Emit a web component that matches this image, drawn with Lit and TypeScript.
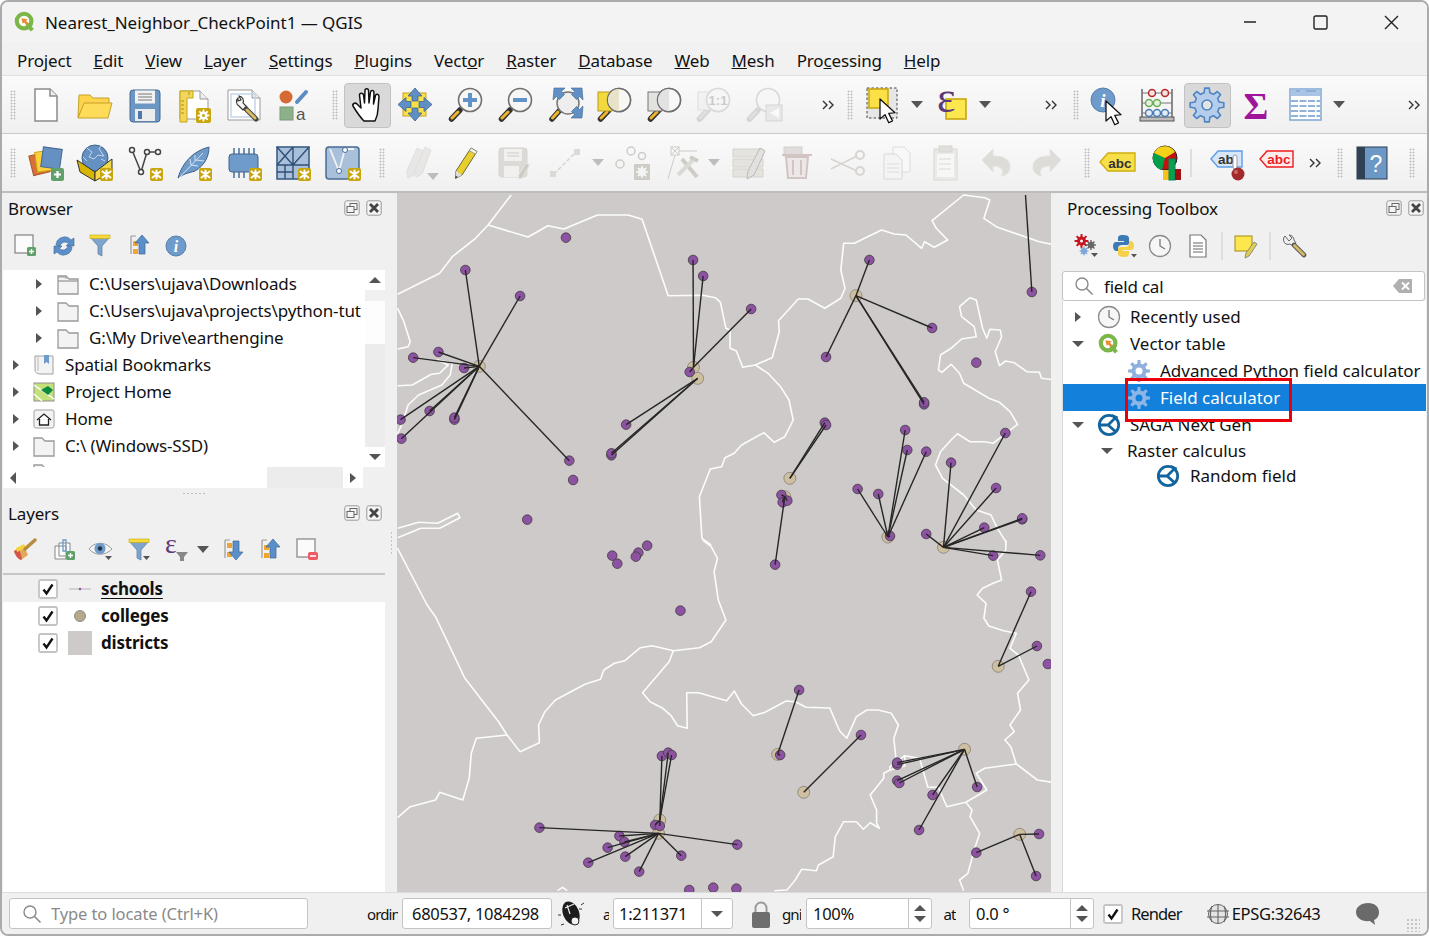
import { LitElement, html, css, svg } from 'lit'
import { customElement } from 'lit/decorators.js'

type Pt = [number, number]

// the map was measured off two crops, so points are kept in crop coordinates
const T = (x: number, y: number): Pt => [395 + x / 2.376, 195 + y / 3]
const B = (x: number, y: number): Pt => [395 + x / 2.376, 540 + y / 3]
const pts = (f: (x: number, y: number) => Pt, ...n: number[]) => {
  const out: Pt[] = []
  for (let i = 0; i < n.length; i += 2) out.push(f(n[i], n[i + 1]))
  return out
}

const borders: Pt[][] = [
  pts(T, 275, 0, 220, 90, 190, 130, 135, 185, 105, 235, 5, 298),
  pts(T, 220, 90, 315, 126, 362, 92, 400, 102, 480, 60, 553, 60, 586, 73, 648, 302, 730, 301, 760, 308, 772, 322, 785, 400, 795, 405, 795, 460, 810, 468, 825, 517, 855, 510, 895, 488, 912, 410, 910, 377, 957, 312, 980, 312, 1020, 340, 1058, 310, 1068, 280, 1058, 225, 1065, 145, 1090, 145, 1155, 105, 1185, 117, 1213, 120, 1250, 160, 1257, 140, 1280, 157, 1312, 135, 1285, 100, 1275, 77, 1350, 0, 1400, 8, 1412, 15, 1398, 70, 1430, 97, 1530, 140, 1568, 150),
  pts(T, 855, 510, 885, 535, 915, 575, 935, 615, 945, 675, 925, 725, 900, 742, 875, 713, 822, 750, 805, 775, 783, 788, 775, 815, 748, 822, 722, 905, 728, 1030, 750, 1050),
  pts(T, 1365, 308, 1340, 335, 1345, 365, 1375, 395, 1380, 425, 1345, 432, 1320, 460, 1295, 480, 1290, 525, 1298, 532, 1320, 508, 1340, 535, 1350, 565, 1410, 610, 1435, 622, 1460, 650, 1478, 688, 1450, 715, 1420, 745, 1400, 740, 1365, 740, 1335, 716, 1320, 735, 1295, 770, 1283, 810, 1300, 850, 1350, 900, 1380, 945, 1415, 960, 1430, 1000, 1450, 1040, 1450, 1050),
  pts(T, 1365, 308, 1380, 315, 1395, 400, 1405, 430, 1412, 403, 1437, 405, 1440, 425, 1425, 470, 1435, 512, 1450, 498, 1470, 503, 1500, 530, 1530, 532, 1535, 550, 1568, 555),
  pts(T, 5, 340, 20, 380, 35, 440, 30, 455, 5, 462),
  pts(T, 5, 572, 40, 570, 85, 538, 105, 535, 125, 510, 100, 495, 135, 505, 130, 540, 110, 570, 55, 600, 30, 630, 15, 690, 5, 715),
  pts(T, 5, 1000, 55, 982, 100, 985, 148, 955, 153, 968, 105, 1000, 60, 1000, 5, 1028),
  pts(B, 730, 0, 750, 20, 765, 55, 757, 95, 767, 180, 785, 240, 750, 305, 722, 323, 660, 332, 610, 317, 582, 323, 545, 362, 520, 370, 495, 390, 487, 418, 450, 433, 380, 480, 355, 515, 340, 555, 342, 608, 296, 635, 265, 585, 245, 545, 165, 415, 95, 230, 75, 195, 5, 25),
  pts(B, 265, 585, 192, 595, 180, 640, 175, 715, 160, 780, 105, 757, 95, 780, 35, 800, 5, 833),
  pts(B, 660, 332, 650, 365, 587, 458, 605, 485, 635, 505, 655, 527, 670, 557, 693, 565, 692, 458, 720, 458, 787, 482, 805, 453, 822, 492, 850, 527, 878, 517, 928, 483, 950, 485, 975, 502, 1032, 504, 1055, 572, 1072, 595, 1095, 530, 1120, 510, 1147, 510, 1178, 520, 1195, 555, 1184, 595, 1190, 665, 1175, 680, 1175, 690, 1160, 700, 1160, 715, 1128, 765, 1143, 810, 1143, 850, 1150, 865, 1128, 848, 1112, 868, 1095, 845, 1065, 845, 1045, 890, 1040, 950, 1005, 975, 1000, 992, 965, 988, 950, 1020, 930, 1050, 900, 1052),
  pts(B, 1190, 665, 1210, 647, 1245, 655, 1265, 742, 1290, 742, 1310, 800, 1355, 787, 1405, 750, 1380, 700, 1400, 685, 1475, 672, 1525, 720, 1560, 727),
  pts(B, 1210, 647, 1210, 678, 1175, 690),
  pts(B, 1475, 672, 1462, 620, 1448, 600, 1470, 575, 1460, 555, 1485, 510, 1478, 460, 1505, 420, 1480, 345, 1460, 325, 1475, 280, 1445, 272, 1410, 258, 1398, 235, 1403, 190, 1382, 165, 1395, 145, 1420, 130, 1440, 120, 1430, 60, 1450, 30, 1450, 0),
  pts(B, 1355, 787, 1370, 810, 1365, 830, 1388, 880, 1375, 930, 1360, 1000, 1340, 1020, 1350, 1052),
  pts(B, 385, 1052, 397, 1042, 408, 1052),
]

interface Hub { c: Pt; s: Pt[] }
const hubs: Hub[] = [
  { c: T(199, 514), s: pts(T, 166, 225, 296, 303, 102, 471, 42, 488, 163, 519, 140, 674, 140, 668, 81, 648, 12, 674, 14, 731, 413, 797) },
  { c: T(708, 517), s: pts(T, 707, 195, 731, 243, 845, 342, 699, 531) },
  { c: T(718, 550), s: pts(T, 548, 689, 513, 781, 513, 775) },
  { c: T(1094, 302), s: pts(T, 1126, 195, 1275, 399, 1023, 486, 1256, 628, 1256, 622) },
  { c: T(937, 850), s: pts(T, 1020, 683, 1023, 690) },
  { c: T(925, 905), s: [...pts(T, 917, 900, 920, 922, 931, 917), B(902, 74)] },
  { c: T(1170, 1026), s: pts(T, 1098, 882, 1147, 897, 1211, 705, 1216, 765, 1261, 770, 1175, 1023) },
  { c: B(1302, 22), s: [...pts(T, 1320, 803, 1449, 714, 1427, 879, 1399, 998, 1489, 973, 1489, 970, 1261, 1017), ...pts(B, 1420, 47, 1532, 46)] },
  { c: B(1432, 379), s: pts(B, 1510, 155, 1524, 318) },
  { c: B(908, 643), s: pts(B, 959, 450, 914, 645) },
  { c: B(970, 757), s: pts(B, 1106, 585) },
  { c: B(1352, 628), s: pts(B, 1192, 674, 1192, 668, 1192, 722, 1197, 729, 1276, 765, 1382, 741, 1244, 870) },
  { c: B(1483, 883), s: pts(B, 1529, 882, 1380, 938, 1522, 1008) },
  { c: B(628, 840), s: pts(B, 633, 648, 648, 638, 656, 645, 617, 855, 628, 858) },
  { c: B(625, 880), s: pts(B, 342, 863, 532, 888, 544, 906, 504, 923, 458, 968, 546, 950, 579, 995, 679, 947, 812, 914) },
]
const loners: Pt[] = [
  ...pts(T, 405, 128, 422, 855, 313, 974, 1380, 503, 1512, 291),
  ...pts(B, 598, 17, 515, 47, 527, 71, 577, 38, 571, 50, 677, 212, 1550, 372, 698, 1050, 755, 1043, 810, 1046),
]

const gearPath = (cx: number, cy: number, R: number, r: number, n: number) => {
  let d = ''
  const step = (Math.PI * 2) / n
  for (let i = 0; i < n; i++) {
    const a = i * step
    const p = [
      [r, a - step * 0.3], [R, a - step * 0.17], [R, a + step * 0.17], [r, a + step * 0.3],
    ]
    for (const [rad, t] of p) {
      d += `${d ? 'L' : 'M'}${(cx + rad * Math.cos(t)).toFixed(2)} ${(cy + rad * Math.sin(t)).toFixed(2)}`
    }
  }
  return d + 'Z'
}

const badge = (x = 23, y = 23, s = 13) => svg`
  <rect x=${x} y=${y} width=${s} height=${s} rx="2" fill="#c8a60e"/>
  <g stroke="#fff" stroke-width="2" stroke-linecap="round">
    <path d="M${x + s / 2} ${y + 2.5}v${s - 5}M${x + 2.5} ${y + 3.5}l${s - 5} ${s - 7}M${x + s - 2.5} ${y + 3.5}l${-(s - 5)} ${s - 7}"/>
  </g>`

const mag = (inner: unknown, ring = '#6f6f6f', handle = '#eeb62c', edge = '#333') => svg`
  <path d="M12 23L3.5 32" stroke=${edge} stroke-width="5.5" stroke-linecap="round"/>
  <path d="M10 25L4 31" stroke=${handle} stroke-width="3" stroke-linecap="round"/>
  <circle cx="22" cy="13" r="11.5" fill="#f6f6f4" stroke=${ring} stroke-width="1.6"/>
  ${inner}`

const cursor = (x: number, y: number, k = 1.25) => svg`
  <path transform="translate(${x} ${y}) scale(${k})" d="M0 0L0 16L4 12.5L7 19L10 17.5L7 11.5L12 11Z" fill="#fff" stroke="#111" stroke-width="1" stroke-linejoin="round"/>`

const pencil = (c = '#e7cf2e', tip = '#444') => svg`
  <path d="M24 3l6 3.5L15 30l-6.5 3.5.5-7.5z" fill=${c} stroke="#6a6a3a" stroke-width="1"/>
  <path d="M9 26l6 4-6.5 3.5z" fill="#ddd"/><path d="M8.5 30.5l2.5 1.6-2.7 1.4z" fill=${tip}/>
  <path d="M24 3l6 3.5-1.5 2.6-6-3.5z" fill="#f4f4f4" stroke="#888" stroke-width=".7"/>`

const FAINT = '#dcdad6'
const FAINTL = '#cfccc7'

const ICONS: Record<string, unknown> = {
  file: svg`<path d="M7 2h15l7 7v25H7z" fill="#fff" stroke="#8a8a8a" stroke-width="1.5"/><path d="M22 2v7h7" fill="#eee" stroke="#8a8a8a" stroke-width="1.5"/>`,
  open: svg`<path d="M1 30L2 8h11l3 3h16v6H8z" fill="#fdd44c" stroke="#c6a02a"/><path d="M1 31l6-15h28l-4 15z" fill="#ffdb5a" stroke="#c6a02a"/>`,
  save: svg`<rect x="3" y="3" width="30" height="32" rx="3" fill="#6c97c5" stroke="#45688f"/><rect x="8" y="3.5" width="20" height="13" fill="#f2f2f2"/><path d="M11 7h14M11 10h14M11 13h14" stroke="#777"/><rect x="8" y="22" width="20" height="12" fill="#ececec"/><rect x="11" y="24" width="4" height="8" fill="#4e77a5"/>`,
  layout: svg`<path d="M4 4h20l8 8v20H4z" fill="#fff" stroke="#999"/><path d="M24 4v8h8" fill="#eee" stroke="#999"/><path d="M4 4h13v7H11v24H4z" fill="#f1d65d" stroke="#c8a60e"/><path d="M5 14h3M5 18h3M5 22h3M5 26h3M13 5v3" stroke="#b58c0c"/><rect x="20" y="21" width="15" height="15" rx="2" fill="#c8a60e"/><path d="${gearPath(27.5, 28.5, 6, 4, 8)}" fill="#fff"/><circle cx="27.5" cy="28.5" r="1.5" fill="#c8a60e"/>`,
  style: svg`<path d="M2 3h24l8 8v22H2z" fill="#fff" stroke="#999"/><path d="M26 3v8h8" fill="#eee" stroke="#999"/><rect x="5" y="7" width="24" height="23" fill="none" stroke="#c4d5ea" stroke-width="1.5"/><path d="M12 11a5 5 0 0 0 1 8l4 4 4-3-4-4a5 5 0 0 0-4-7l2 4-3 1z" fill="#f5f5f5" stroke="#333" stroke-width="1.1"/><path d="M20 22l10 10" stroke="#444" stroke-width="5" stroke-linecap="round"/><path d="M21 23l8 8" stroke="#d9bc62" stroke-width="3" stroke-linecap="round"/>`,
  styling: svg`<circle cx="11" cy="10" r="6.5" fill="#d56a35"/><path d="M22 15L31 5" stroke="#5d8cc2" stroke-width="4" stroke-linecap="round"/><rect x="5" y="20" width="13" height="13" fill="#8cb089" stroke="#7a9a77"/><text x="21" y="33" font-size="17" fill="#555" font-family="Liberation Sans, sans-serif">a</text>`,
  hand: svg`<path d="M14 34C10 30 6 24 3 19C2 17 5 15 7 17L11 21L9.5 8C9.5 5.5 13 5.5 13.5 8L14.5 16L15 3.5C15 1 18.5 1 18.5 3.5L19 16L20.5 5C21 3 24 3 24 5.5L23.5 17L25.5 8.5C26 6.5 29 7 29 9.5L28 22C28 27 27 30 25 34Z" fill="#fff" stroke="#111" stroke-width="1.5" stroke-linejoin="round"/>`,
  panSel: svg`<rect x="5" y="6" width="23" height="23" fill="#fce146" stroke="#c6a02a"/><g fill="#5f8fc4" stroke="#3e6690" stroke-width=".8"><path d="M17 1l7 8h-4v5h-6V9h-4z"/><path d="M17 34l7-8h-4v-5h-6v5h-4z"/><path d="M0 17.5l8-7v4h5v6H8v4z"/><path d="M34 17.5l-8-7v4h-5v6h5v4z"/></g>`,
  zoomIn: mag(svg`<path d="M15 13h14M22 6v14" stroke="#6292c6" stroke-width="4"/>`),
  zoomOut: mag(svg`<path d="M15 13h14" stroke="#6292c6" stroke-width="4"/>`),
  zoomFull: svg`<path d="M12 23L4 32" stroke="#333" stroke-width="5.5" stroke-linecap="round"/><path d="M10 25L4.5 31" stroke="#eeb62c" stroke-width="3" stroke-linecap="round"/><circle cx="20" cy="16" r="11" fill="#eee" stroke="#777" stroke-width="1.5"/><g fill="#5f8fc4" stroke="#3e6690" stroke-width=".6"><path d="M6 1h11l-3.5 3.5 3 3-5 5-3-3L5 13z"/><path d="M34 1H23l3.5 3.5-3 3 5 5 3-3L35 13z"/><path d="M34 31H23l3.5-3.5-3-3 5-5 3 3 3.500-3.500z"/></g>`,
  zoomLayer: mag(svg`<rect x="1" y="5" width="14" height="19" fill="#f4d93e" stroke="#b89a1a"/><circle cx="22" cy="13" r="11.5" fill="#f8f7f3" stroke="#6f6f6f" stroke-width="1.6"/><path d="M22 2a11 11 0 0 0 0 22z" fill="#e8e3c8"/>`),
  zoomSel: mag(svg`<rect x="1" y="5" width="14" height="19" fill="#e4e2de" stroke="#777"/><circle cx="22" cy="13" r="11.500" fill="#f8f8f8" stroke="#6f6f6f" stroke-width="1.6"/><path d="M22 2a11 11 0 0 0 0 22z" fill="#e2e2e2"/>`),
  zoom11: svg`<g opacity=".55">${mag(svg`<rect x="2" y="5" width="15" height="18" fill="#eee" stroke="#ccc"/><circle cx="22" cy="13" r="11.5" fill="#f6f6f6" stroke="#c4c4c4" stroke-width="1.6"/><text x="22" y="18" text-anchor="middle" font-size="13" font-weight="700" fill="#a8a8a8" font-family="Liberation Sans, sans-serif">1:1</text>`, '#ccc', '#d0d0d0', '#bbb')}</g>`,
  zoomLast: svg`<g opacity=".55">${mag(svg`<circle cx="22" cy="13" r="11.5" fill="#f6f6f6" stroke="#c4c4c4" stroke-width="1.6"/><rect x="20" y="18" width="16" height="16" fill="#e0e0e0" stroke="#bbb"/><path d="M33 21l-9 5 9 5z" fill="#fff"/>`, '#ccc', '#d0d0d0', '#bbb')}</g>`,
  select: svg`<rect x="1" y="1" width="30" height="30" fill="#e6e6e6" stroke="#444" stroke-dasharray="2.5 2"/><rect x="3" y="2" width="19" height="19" fill="#fce146" stroke="#c8a60e" stroke-width="1.5"/>${cursor(14, 12)}`,
  expr: svg`<rect x="11" y="12" width="20" height="20" fill="#fde74f" stroke="#c8a60e" stroke-width="1.6"/><text x="2" y="25" font-size="44" fill="#5b3a7a" font-family="Liberation Serif, serif">ε</text>`,
  identify: svg`<circle cx="14" cy="13" r="12" fill="#6f9bcb" stroke="#557fae"/><text x="14" y="20" text-anchor="middle" font-size="19" font-weight="700" font-style="italic" fill="#fff" font-family="Liberation Serif, serif">i</text>${cursor(17, 14)}`,
  abacus: svg`<path d="M3 2v31M33 2v31" stroke="#666" stroke-width="1.5"/><rect x="1" y="30" width="34" height="4" fill="#bbb" stroke="#555"/><path d="M3 6h30M3 16h30M3 26h30" stroke="#777"/><g fill="#f4e3e0" stroke="#b52b2b" stroke-width="1.5"><circle cx="13" cy="6" r="3.500"/><circle cx="26" cy="6" r="3.500"/></g><g fill="#e6f2df" stroke="#6dac5b" stroke-width="1.5"><circle cx="10" cy="16" r="3.500"/><circle cx="18" cy="16" r="3.500"/></g><g fill="#e3edf7" stroke="#4a7cb3" stroke-width="1.5"><circle cx="10" cy="26" r="3.500"/><circle cx="18" cy="26" r="3.500"/><circle cx="26" cy="26" r="3.500"/></g>`,
  gear: svg`<path d="${gearPath(18, 18, 17, 12.5, 8)}" fill="#b5cdea" stroke="#4d85c5" stroke-width="1.6" stroke-linejoin="round"/><circle cx="18" cy="18" r="5" fill="#e4e4e4" stroke="#4d85c5" stroke-width="1.6"/>`,
  sigma: svg`<text x="18" y="32" text-anchor="middle" font-size="38" font-weight="700" fill="#a0149c" font-family="Liberation Serif, serif">Σ</text>`,
  table: svg`<rect x="2" y="2" width="31" height="31" fill="#fff" stroke="#7fa8d4" stroke-width="1.500"/><rect x="3" y="3" width="29" height="6" fill="#a9c4e4"/><path d="M3 14h29M3 19h29M3 24h29M3 29h29" stroke="#6f9bcb" stroke-width="1.5" stroke-dasharray="7 1.500"/><path d="M8 4h4M18 4h10" stroke="#6f9bcb"/>`,

  addLayer: svg`<rect x="3" y="9" width="17" height="20" fill="#d8703a" stroke="#a8542a" transform="rotate(-14 11 19)"/><rect x="8" y="6" width="18" height="20" fill="#fcd23c" stroke="#c8a60e" transform="rotate(-8 17 16)"/><rect x="14" y="3" width="19" height="20" fill="#6590c2" stroke="#46678e" transform="rotate(8 23 13)"/><rect x="23" y="23" width="13" height="13" rx="2" fill="#5fa06b"/><path d="M29.500 26v7M26 29.500h7" stroke="#fff" stroke-width="2.200"/>`,
  wms: svg`<circle cx="18" cy="13" r="13" fill="#6590c2" stroke="#42628a"/><path d="M10 3l5 4-3 5 5 2 4-4 6 1-5-7 2-3M6 12l4 4M24 14l4 2" stroke="#c4d6ea" fill="none"/><path d="M0 15l18 12v9L3 27z" fill="#d7b500" stroke="#333"/><path d="M18 27l17-13v12l-17 10z" fill="#f0d84a" stroke="#333"/>${badge(23, 23)}`,
  vector: svg`<path d="M5 5l9 22 6-20h11" fill="none" stroke="#444" stroke-width="1.500"/><g fill="#fff" stroke="#444" stroke-width="1.500"><circle cx="5" cy="5" r="2.500"/><circle cx="14" cy="27" r="2.500"/><circle cx="20" cy="7" r="2.500"/><circle cx="31" cy="7" r="2.500"/></g>${badge(23, 23)}`,
  feather: svg`<path d="M2 33C6 18 17 6 33 2C33 12 28 21 19 26L12 28C8 29 5 31 2 33Z" fill="#6f9bcb" stroke="#42628a"/><path d="M3 33L27 8M15 20l-1-6M19 16l0-6M15 20l7 1M20 15l8 1" stroke="#d6e3f1" fill="none"/>${badge(23, 23)}`,
  chip: svg`<path d="M8 3v7M13 3v7M18 3v7M23 3v7M28 3v7M8 26v7M13 26v7M18 26v7" stroke="#4a6f9a" stroke-width="1.500"/><rect x="3" y="9" width="29" height="18" rx="3" fill="#6f9bcb" stroke="#42628a"/>${badge(23, 23)}`,
  mesh: svg`<rect x="2" y="2" width="32" height="32" fill="#a9c0db" stroke="#3e5f85" stroke-width="1.600"/><path d="M2 20h32M18 2v32M2 2l16 18M2 20L18 2M18 20L34 2M2 27h16M10 20v14" stroke="#2f4f75" stroke-width="1.400" fill="none"/>${badge(23, 23)}`,
  vpoly: svg`<rect x="1" y="2" width="33" height="32" rx="3" fill="#a9c0db" stroke="#486c94" stroke-width="1.500"/><path d="M5 4l9 22 6-22h9" fill="none" stroke="#f2f2f2" stroke-width="1.800"/><g fill="#fff" stroke="#486c94"><circle cx="14" cy="26" r="2.500"/><circle cx="20" cy="5" r="2.500"/></g>${badge(23, 23)}`,

  dPencils: svg`<g opacity=".5"><path d="M19 3l6 3-9 24-6 3-1-7z" fill="${FAINT}" stroke="#ccc"/><path d="M27 2l6 3-9 24-6 3-1-7z" fill="${FAINT}" stroke="#ccc"/></g>`,
  pencil: pencil(),
  dSave: svg`<rect x="3" y="3" width="28" height="29" rx="3" fill="${FAINT}" stroke="#d6d4d0"/><rect x="8" y="4" width="18" height="12" fill="#f1f0ee"/><path d="M11 8h12M11 11h12" stroke="#cfcdc9"/><rect x="8" y="21" width="15" height="11" fill="#f1f0ee"/><path d="M30 18l3.500 2-7 13-4 1 0-4z" fill="#cfccc8" stroke="#e8e6e3"/>`,
  dLine: svg`<path d="M7 29L29 7" stroke="#d6d4d0" stroke-width="1.500" stroke-dasharray="4 2"/><rect x="3" y="26" width="6" height="6" fill="${FAINT}"/><rect x="27" y="4" width="6" height="6" fill="${FAINT}"/>`,
  dPoints: svg`<g fill="none" stroke="${FAINTL}" stroke-width="1.500"><circle cx="17" cy="6" r="4"/><circle cx="28" cy="11" r="3.500"/><circle cx="6" cy="19" r="4"/></g><rect x="20" y="19" width="16" height="16" rx="1" fill="${FAINTL}"/><path d="${gearPath(28, 27, 6, 4, 8)}" fill="#f4f4f4"/>`,
  dTools: svg`<rect x="5" y="2" width="8" height="8" fill="none" stroke="${FAINTL}"/><path d="M5 2l8 8M13 2l-8 8M13 6h18M9 10L2 34" stroke="${FAINTL}"/><path d="M16 14l15 18" stroke="${FAINTL}" stroke-width="4"/><path d="M12 30l16-16" stroke="${FAINT}" stroke-width="4"/><path d="M24 12l8 4" stroke="${FAINTL}" stroke-width="4"/>`,
  dTable: svg`<path d="M2 4h30v8H2zM2 14h30v8H2zM2 24h30v8H2z" fill="#e5e3de" stroke="#d4d2cd"/><path d="M29 3l5 3-11 24-7 4 1-8z" fill="#e3e1dd" stroke="#bbb"/>`,
  dTrash: svg`<rect x="4" y="2" width="18" height="9" fill="#e0dcdb" stroke="#d4d0cf"/><path d="M2 10h30" stroke="#d2c4c2" stroke-width="2"/><path d="M6 12l2 21h18l2-21z" fill="#ece8e7" stroke="#d2c4c2" stroke-width="2"/><path d="M13 15v15M21 15v15" stroke="#d2c4c2" stroke-width="2"/>`,
  dScissors: svg`<path d="M1 14l26 12M1 24l26-13" stroke="#d8d5d1" stroke-width="1.800"/><circle cx="30" cy="10" r="4" fill="none" stroke="#d8d5d1" stroke-width="2"/><circle cx="30" cy="26" r="4" fill="none" stroke="#d8d5d1" stroke-width="2"/>`,
  dCopy: svg`<path d="M14 2h11l6 6v19H14z" fill="#f8f8f8" stroke="#dcdcdc"/><path d="M5 9h12l6 6v19H5z" fill="#f4f4f4" stroke="#d8d8d8"/><path d="M8 19h12M8 23h12M8 27h12" stroke="#dcdcdc"/>`,
  dPaste: svg`<rect x="5" y="4" width="23" height="31" fill="#eceae7" stroke="#dad8d4"/><rect x="8" y="9" width="17" height="23" fill="#f7f7f7"/><rect x="10" y="1" width="13" height="6" fill="#e0deda" stroke="#d8d6d2"/><path d="M10 14h12M10 19h12M10 24h12" stroke="#dcdad7"/>`,
  dUndo: svg`<path d="M3 15L14 4v7c10 0 17 3 17 11 0 5-4 9-9 9 3-3 3-10-8-10v6z" fill="#dddcd8" stroke="#e5e4e1"/>`,
  dRedo: svg`<path d="M33 15L22 4v7c-10 0-17 3-17 11 0 5 4 9 9 9-3-3-3-10 8-10v6z" fill="#dddcd8" stroke="#e5e4e1"/>`,
  abcY: svg`<path d="M0 17L8 8h27v18H8z" fill="#f7df4a" stroke="#d0ae0c" stroke-width="1.400"/><text x="20" y="22.500" text-anchor="middle" font-size="13.500" font-weight="700" fill="#333" font-family="Liberation Sans, sans-serif">abc</text>`,
  diagram: svg`<circle cx="15" cy="13" r="12" fill="#c2110f" stroke="#222"/><path d="M15 13L4 8a12 12 0 0 0 8 17z" fill="#00a04a"/><path d="M15 13L4 8a12 12 0 0 1 21-1z" fill="#f5d21a"/><rect x="13" y="25" width="6" height="10" fill="#f9c21a"/><rect x="19" y="14" width="6" height="21" fill="#0da04a" stroke="#086"/><rect x="25" y="24" width="6" height="11" fill="#a01212"/>`,
  abPin: svg`<path d="M0 14L7 6h24v16H7z" fill="#d7e6f8" stroke="#5d9ee8" stroke-width="1.400"/><text x="7" y="19" font-size="13.500" font-weight="700" fill="#333" font-family="Liberation Sans, sans-serif">ab</text><rect x="22" y="10" width="4" height="14" rx="2" fill="#fff" stroke="#999"/><circle cx="27" cy="29" r="6.500" fill="#a32a2a"/><circle cx="25" cy="27" r="2" fill="#c96a6a"/>`,
  abcR: svg`<path d="M1 14L8 6h26v16H8z" fill="#fdecec" stroke="#ee1c1c" stroke-width="1.400"/><text x="20" y="19" text-anchor="middle" font-size="13.500" font-weight="700" fill="#ee1c1c" font-family="Liberation Sans, sans-serif">abc</text>`,
  help: svg`<rect x="2" y="2" width="30" height="32" fill="#6d97c4" stroke="#2c3e50"/><rect x="2" y="2" width="8" height="32" fill="#2f4155"/><text x="21" y="27" text-anchor="middle" font-size="23" fill="#fff" font-family="Liberation Sans, sans-serif">?</text>`,
}

const qgisLogo = (size = 22) => html`<svg width=${size} height=${size} viewBox="0 0 24 24">
  <circle cx="11" cy="11" r="8" fill="#fff" stroke="#7ab648" stroke-width="4.500"/>
  <path d="M14 14l6 7" stroke="#7ab648" stroke-width="4.500"/>
  <path d="M8 8l7 1-2 1.500 3 3-2 2-3-3L9.500 14z" fill="#ee8a2e"/>
</svg>`

const sagaIcon = html`<svg width="26" height="26" viewBox="0 0 26 26">
  <circle cx="13" cy="13" r="10.500" fill="#fff" stroke="#14659f" stroke-width="3"/>
  <path d="M3 13h9l8-8M12 13l9 8" fill="none" stroke="#14659f" stroke-width="3"/>
  <path d="M16 1l7 3-2 5z" fill="#14659f"/>
</svg>`

const clockIcon = (s = 24) => html`<svg width=${s} height=${s} viewBox="0 0 24 24">
  <circle cx="12" cy="12" r="10.500" fill="#f6f6f6" stroke="#8b8b8b" stroke-width="1.300"/>
  <path d="M12 5v7l5 3" fill="none" stroke="#777" stroke-width="1.300"/>
</svg>`

const gearSmall = (fill = '#8db0dc', hole = '#fff') => html`<svg width="24" height="24" viewBox="0 0 24 24">
  <path d="${gearPath(12, 12, 11, 7.500, 8)}" fill=${fill}/><circle cx="12" cy="12" r="3.500" fill=${hole}/>
</svg>`

const folder = (open = false) => html`<svg width="24" height="24" viewBox="0 0 24 24">
  <path d="M2 4h8l3 3h9v15H2z" fill="#f3f3f3" stroke="#9a9a9a" stroke-width="1.300"/>
  ${open ? svg`<path d="M2 9h20" stroke="#9a9a9a" stroke-width="1.300"/><path d="M2 5h8v2" fill="none" stroke="#9a9a9a"/>` : ''}
</svg>`

const bookmark = html`<svg width="24" height="24" viewBox="0 0 24 24">
  <path d="M3 3h18v18H8C5 21 3 19 3 17z" fill="#f3f3f3" stroke="#a0a0a0"/>
  <path d="M6 4v14" stroke="#bbb"/><path d="M12 2h5v9l-2.500-2-2.500 2z" fill="#6f9bcb"/>
</svg>`

const projHome = html`<svg width="24" height="24" viewBox="0 0 24 24">
  <rect x="2" y="3" width="20" height="18" fill="#c3e07a" stroke="#8f8f8f"/>
  <path d="M2 5l20 14M2 14l8 7" stroke="#fff" stroke-width="1.500"/>
  <path d="M9 10l7-4 5 4-5 5z" fill="#0a8a3a"/>
</svg>`

const homeIcon = html`<svg width="24" height="24" viewBox="0 0 24 24">
  <rect x="2" y="3" width="20" height="18" rx="2" fill="#f3f3f3" stroke="#a0a0a0"/>
  <path d="M5 13l7-6 7 6M7.500 12v6h9v-6" fill="#fff" stroke="#222" stroke-width="1.300"/>
</svg>`

const checkbox = html`<svg width="20" height="20" viewBox="0 0 20 20">
  <rect x="1" y="1" width="18" height="18" rx="1.500" fill="#fff" stroke="#c4c4c4" stroke-width="1.800"/>
  <path d="M5.500 10.500l3 4 6-9" fill="none" stroke="#111" stroke-width="2.400"/>
</svg>`

const dockBtns = html`<span class="dock-btns">
  <svg width="16" height="16" viewBox="0 0 16 16"><rect x=".8" y=".8" width="14.400" height="14.400" rx="2" fill="#f4f4f4" stroke="#999"/><rect x="6" y="3.500" width="7" height="6" fill="none" stroke="#666"/><rect x="3" y="6.500" width="7" height="6" fill="#f4f4f4" stroke="#666"/></svg>
  <svg width="16" height="16" viewBox="0 0 16 16"><rect x=".8" y=".8" width="14.400" height="14.400" rx="2" fill="#f4f4f4" stroke="#999"/><path d="M4 4l8 8M12 4l-8 8" stroke="#444" stroke-width="2.800"/></svg>
</span>`

const DI: Record<string, unknown> = {
  newConn: svg`<rect x="2" y="1" width="18" height="18" fill="#fbfbfb" stroke="#8a8a8a" stroke-width="1.300"/><rect x="14" y="13" width="9" height="9" rx="1.500" fill="#5fa06b"/><path d="M18.500 15v5M16 17.500h5" stroke="#fff" stroke-width="1.400"/>`,
  refresh: svg`<path d="M4 11a8.500 8.500 0 0 1 15-5l3-2v8h-8l2.500-2.500A5 5 0 0 0 8 12z" fill="#5a8fcb" stroke="#3e6690" stroke-width=".6"/><path d="M20 13a8.500 8.500 0 0 1-15 5l-3 2v-8h8l-2.500 2.500A5 5 0 0 0 16 12z" fill="#5a8fcb" stroke="#3e6690" stroke-width=".6"/>`,
  filter: svg`<path d="M1 3h20l-8 9v10l-4-2v-8z" fill="#7fa5cf" stroke="#55789f" stroke-width=".7"/><rect x="1" y="1" width="20" height="3.500" fill="#f5dc3c" stroke="#c8a60e" stroke-width=".6"/>`,
  collapse: svg`<path d="M4 2v18M4 2h5" stroke="#999" stroke-width="1.200" fill="none"/><rect x="6" y="7" width="5" height="5" fill="#f0a432"/><rect x="6" y="15" width="5" height="5" fill="#f0a432"/><path d="M15 1l7 8h-4v11h-6V9H8z" fill="#5a8fcb" stroke="#3e6690" stroke-width=".7"/>`,
  expand: svg`<path d="M4 2v18M4 2h5" stroke="#999" stroke-width="1.200" fill="none"/><rect x="6" y="5" width="5" height="5" fill="#f0a432"/><rect x="6" y="14" width="5" height="5" fill="#f0a432"/><path d="M15 22l7-8h-4V3h-6v11H8z" fill="#5a8fcb" stroke="#3e6690" stroke-width=".7"/>`,
  info: svg`<circle cx="12" cy="12" r="10" fill="#6f9bcb" stroke="#557fae"/><text x="12" y="18" text-anchor="middle" font-size="16" font-weight="700" font-style="italic" fill="#fff" font-family="Liberation Serif, serif">i</text>`,
  brush: svg`<path d="M1 13l10-5 4 9-7 5C5 21 2 17 1 13z" fill="#e2a85b"/><path d="M1 13l5-2.500 3 10L8 22C5 21 2 17 1 13z" fill="#d4534a"/><path d="M3 10l8-4 2 4-9 4z" fill="#f3d43c"/><path d="M12 11l10-9" stroke="#b88a3c" stroke-width="3.500" stroke-linecap="round"/>`,
  addGroup: svg`<path d="M3 8h11v13H3zM7 5h11v13H7z" fill="#fafafa" stroke="#888"/><path d="M11 2h3v11h-3z" fill="none" stroke="#6f9bcb" stroke-width="1.300"/><rect x="14" y="13" width="9" height="9" rx="1.500" fill="#5fa06b"/><path d="M18.500 15v5M16 17.500h5" stroke="#fff" stroke-width="1.400"/>`,
  eye: svg`<path d="M0 11C5 4 16 3 23 11 16 18 6 18 0 11z" fill="#f4f4f4" stroke="#999"/><circle cx="11" cy="10.500" r="5.500" fill="#6f9bcb"/><circle cx="11" cy="10.500" r="2.200" fill="#234"/><path d="M16 18h7l-3.500 4z" fill="#555"/>`,
  filter2: svg`<path d="M1 3h20l-8 9v10l-4-2v-8z" fill="#7fa5cf" stroke="#55789f" stroke-width=".7"/><rect x="1" y="1" width="20" height="3.500" fill="#f5dc3c" stroke="#c8a60e" stroke-width=".6"/><path d="M15 18h7l-3.500 4z" fill="#555"/>`,
  epsF: svg`<text x="0" y="15" font-size="28" fill="#5b3a7a" font-family="Liberation Serif, serif">ε</text><path d="M11 14h12l-4 5v4h-4v-4z" fill="#888"/>`,
  removeL: svg`<rect x="2" y="1" width="18" height="18" fill="#fbfbfb" stroke="#8a8a8a" stroke-width="1.300"/><rect x="13" y="14" width="10" height="8" rx="2" fill="#ee5a64"/><path d="M15 18h6" stroke="#fff" stroke-width="1.600"/>`,
  models: svg`<path d="${gearPath(7.500, 7, 7, 4.500, 8)}" fill="#c8141e"/><circle cx="7.500" cy="7" r="1.500" fill="#fff"/><path d="${gearPath(17, 11, 5, 3.300, 8)}" fill="#666"/><path d="${gearPath(10, 17, 4.500, 3, 8)}" fill="#7ea6d8"/><path d="M17 19h7l-3.500 4z" fill="#555"/>`,
  python: svg`<path d="M11 1C6 1 6 3 6 5v2h6v1H4C2 8 1 10 1 12s1 5 3 5h2v-3c0-2 2-3 4-3h5c1.500 0 2-1 2-2V4c0-2-2-3-6-3z" fill="#3b7ab5"/><path d="M12 23c5 0 5-2 5-4v-2h-6v-1h8c2 0 3-2 3-4s-1-5-3-5h-2v3c0 2-2 3-4 3H8c-1.500 0-2 1-2 2v5c0 2 2 3 6 3z" fill="#f5d04a"/><path d="M19 20h6l-3 3.500z" fill="#555"/>`,
  doc: svg`<path d="M4 1h11l5 5v17H4z" fill="#fff" stroke="#777" stroke-width="1.200"/><path d="M7 9h10M7 12h10M7 15h10M7 18h10" stroke="#666"/>`,
  noteEdit: svg`<rect x="1" y="2" width="17" height="15" fill="#fde74f" stroke="#a48a12"/><path d="M20 8l3 2-8 12-4 2 1-5z" fill="#e1cf55" stroke="#777" stroke-width=".8"/>`,
  wrench: svg`<path d="M3 2a5 5 0 0 0 1 8 5 5 0 0 0 4 0l3 2 3-3-2-3a5 5 0 0 0-5-5l3 3-3 3z" fill="#f0f0f0" stroke="#666"/><path d="M12 11l10 10" stroke="#555" stroke-width="4.600" stroke-linecap="round"/><path d="M12.500 11.500l9 9" stroke="#d7ba66" stroke-width="2.800" stroke-linecap="round"/>`,
}

const ROW1: [string, number][] = [
  ['grip', 13], ['file', 46], ['open', 95], ['save', 145], ['layout', 194], ['style', 244], ['styling', 293],
  ['grip', 335], ['hand*', 367.5], ['panSel', 416], ['zoomIn', 466], ['zoomOut', 516], ['zoomFull', 566], ['zoomLayer', 615], ['zoomSel', 665], ['zoom11', 714], ['zoomLast', 764],
  ['more', 828], ['grip', 850], ['select', 884], ['dd', 917], ['expr', 953], ['dd', 985], ['more', 1051],
  ['grip', 1076], ['identify', 1107], ['abacus', 1157], ['gear*', 1207], ['sigma', 1256], ['table', 1306], ['dd', 1339], ['more', 1414],
]
const ROW2: [string, number][] = [
  ['grip', 13], ['addLayer', 46], ['wms', 95], ['vector', 145], ['feather', 194], ['chip', 244], ['mesh', 293], ['vpoly', 343],
  ['grip', 382], ['dPencils', 416], ['dds', 433], ['pencil', 465], ['dSave', 514], ['dLine', 565], ['ddf', 598], ['dPoints', 632], ['dTools', 684], ['ddf', 714], ['dTable', 749], ['dTrash', 798], ['dScissors', 848], ['dCopy', 897], ['dPaste', 947], ['dUndo', 997], ['dRedo', 1046],
  ['grip', 1087], ['abcY', 1118], ['diagram', 1168], ['sep', 1191], ['abPin', 1229], ['abcR', 1277], ['more', 1315], ['grip', 1340], ['help', 1373], ['grip', 1412],
]
const BROWSER_TB: [string, number][] = [['newConn', 25], ['refresh', 64], ['filter', 101], ['collapse', 139], ['info', 176]]
const LAYERS_TB: [string, number][] = [['brush', 25], ['addGroup', 64], ['eye', 101], ['filter2', 140], ['epsF', 177], ['dd', 203], ['expand', 233], ['collapse', 270], ['removeL', 307]]
const TOOLBOX_TB: [string, number][] = [['models', 1086], ['python', 1124], ['clock', 1160], ['doc', 1198], ['sep', 1222], ['noteEdit', 1246], ['sep', 1270], ['wrench', 1294]]

const MENU = [
  ['', 'Project', ''], ['', 'E', 'dit'], ['', 'V', 'iew'], ['', 'L', 'ayer'], ['', 'S', 'ettings'], ['', 'P', 'lugins'],
  ['Vect', 'o', 'r'], ['', 'R', 'aster'], ['', 'D', 'atabase'], ['', 'W', 'eb'], ['', 'M', 'esh'], ['Pro', 'c', 'essing'], ['', 'H', 'elp'],
]

@customElement('app-root')
export class AppRoot extends LitElement {
  static styles = css`
    :host {
      display: block;
      width: 1429px;
      height: 936px;
      background: #fff;
      font-family: "Noto Sans", "Open Sans", sans-serif;
      font-size: 17px;
      color: #111;
    }
    .win {
      box-sizing: border-box;
      width: 1429px;
      height: 936px;
      border: 2px solid #ababab;
      border-radius: 8px;
      background: #f0f0f0;
      display: flex;
      flex-direction: column;
      overflow: hidden;
    }
    .title {
      height: 40px;
      flex: none;
      display: flex;
      align-items: center;
      padding-left: 12px;
      background: #f3f3f3;
      font-size: 17px;
      letter-spacing: -0.05px;
    }
    .title .name { margin-left: 9px; }
    .win-btns { margin-left: auto; display: flex; }
    .win-btns span {
      width: 71px;
      height: 40px;
      display: flex;
      align-items: center;
      justify-content: center;
    }
    .menu {
      height: 34px;
      flex: none;
      display: flex;
      align-items: center;
      gap: 22px;
      padding: 4px 0 0 15px;
      box-sizing: border-box;
      border-bottom: 1px solid #e0e0e0;
      background: #f1f1f1;
      letter-spacing: -0.15px;
    }
    .toolbar {
      flex: none;
      height: 58px;
      box-sizing: border-box;
      display: flex;
      align-items: center;
      padding-top: 1px;
      border-bottom: 1px solid #c8c8c8;
      background: linear-gradient(#fafafa, #f0f0f0);
    }
    .toolbar.second { border-bottom: 2px solid #bdbdbd; height: 59px; }
    .tool { flex: none; display: flex; align-items: center; justify-content: center; }
    .tool.icon { width: 36px; height: 36px; }
    .tool.on {
      box-sizing: border-box;
      width: 47px;
      height: 45px;
      background: #d9d9d9;
      border: 1.500px solid #c2c2c2;
      border-radius: 4px;
    }
    .grip {
      width: 6px;
      height: 30px;
      background-image: radial-gradient(circle, #c0c0c0 0.9px, transparent 1.1px);
      background-size: 3px 3px;
    }
    .tool.sep { width: 2px; height: 28px; background: #dedede; }
    .tool.dd { width: 12px; height: 8px; }
    .tool.more { width: 14px; }
    .main {
      flex: 1;
      min-height: 0;
      display: grid;
      grid-template-columns: 382px 12px 654px 10px 1fr;
      padding-left: 1px;
    }
    .col { display: flex; flex-direction: column; min-height: 0; }
    .gutter { display: flex; align-items: center; justify-content: center; }
    .gutter i {
      display: block;
      width: 3px;
      height: 24px;
      background-image: radial-gradient(circle, #c4c4c4 0.8px, transparent 1px);
      background-size: 3px 4px;
    }
    .dock-head {
      height: 30px;
      flex: none;
      display: flex;
      align-items: center;
      justify-content: space-between;
      padding: 0 3px 0 5px;
      letter-spacing: -0.15px;
    }
    .dock-head.right { padding-left: 6px; }
    .dock-btns { display: flex; gap: 6px; }
    .dock-tools {
      flex: none;
      box-sizing: border-box;
      display: flex;
      align-items: center;
      height: 47px;
      padding-bottom: 2px;
    }
    .dock-tools.short { height: 45px; padding-bottom: 2px; }
    .dock-tools .tool.icon { width: 24px; height: 24px; }
    .tree-wrap { flex: none; height: 197px; display: flex; background: #fff; overflow: hidden; }
    .rows { flex: 1; overflow: hidden; min-width: 0; }
    .row {
      height: 27px;
      display: flex;
      align-items: center;
      white-space: nowrap;
      letter-spacing: -0.15px;
      background: #fff;
      overflow: hidden;
    }
    .row .ico { width: 24px; height: 24px; flex: none; display: flex; align-items: center; justify-content: center; }
    .arrow { width: 10px; flex: none; display: flex; align-items: center; justify-content: center; }
    .tri-r { width: 0; height: 0; border-left: 6px solid #555; border-top: 5px solid transparent; border-bottom: 5px solid transparent; }
    .tri-d { width: 0; height: 0; border-top: 6px solid #555; border-left: 6px solid transparent; border-right: 6px solid transparent; }
    .tri-u { width: 0; height: 0; border-bottom: 6px solid #555; border-left: 6px solid transparent; border-right: 6px solid transparent; }
    .tri-l { width: 0; height: 0; border-right: 6px solid #555; border-top: 6px solid transparent; border-bottom: 6px solid transparent; }
    .lv0 { padding-left: 8px; gap: 11px; }
    .lv0 .txt { margin-left: -2px; }
    .lv1 { padding-left: 31px; gap: 12px; }
    .lv1 .txt { margin-left: -3px; }
    .vbar { width: 20px; flex: none; display: flex; flex-direction: column; background: #fdfdfd; }
    .vbar .btn, .hbar .btn { display: flex; align-items: center; justify-content: center; flex: none; background: #fff; }
    .vbar .btn { height: 20px; }
    .vbar .upper { height: 11px; background: #f0f0f0; }
    .vbar .gap { height: 43px; }
    .vbar .thumb { flex: 1; background: #ececec; }
    .hbar { flex: none; height: 21px; display: flex; background: #fff; }
    .hbar .btn { width: 20px; }
    .hbar .fill { flex: 1; }
    .hbar .thumb { width: 76px; background: #ececec; }
    .hbar .corner { width: 22px; background: #f0f0f0; }
    .hsplit { flex: none; height: 10px; display: flex; align-items: center; justify-content: center; }
    .hsplit i {
      display: block;
      width: 24px;
      height: 3px;
      background-image: radial-gradient(circle, #bdbdbd 0.8px, transparent 1px);
      background-size: 4px 3px;
    }
    .layer-tree { flex: 1; background: #fff; border-top: 2px solid #c6c6c6; }
    .layer {
      height: 27px;
      display: flex;
      align-items: center;
      padding-left: 35px;
      font-weight: 700;
      letter-spacing: -0.2px;
    }
    .layer.sel { background: #f0f0f0; }
    .layer .sym { width: 43px; display: flex; align-items: center; justify-content: center; flex: none; }
    .layer u { text-underline-offset: 3px; }
    .map { background: #cfcaca; min-height: 0; overflow: hidden; }
    .map svg { display: block; }
    .search {
      flex: none;
      box-sizing: border-box;
      height: 30px;
      margin: 1px 2px 0 1px;
      display: flex;
      align-items: center;
      gap: 10px;
      padding: 0 11px;
      background: #fff;
      border: 1.500px solid #c4c4c4;
      border-radius: 3px;
      letter-spacing: -0.2px;
    }
    .search .grow { flex: 1; }
    .tb-tree {
      flex: 1;
      position: relative;
      background: #fff;
      border-left: 1px solid #d8d8d8;
      padding-top: 2px;
      margin: 0 1px 0 1px;
    }
    .tb-tree .row { letter-spacing: 0; }
    .tr0 { padding-left: 10px; gap: 14px; }
    .tr0 .txt { margin-left: -5px; }
    .tr1 { padding-left: 64px; gap: 9px; }
    .tr2 { padding-left: 39px; gap: 15px; }
    .tr3 { padding-left: 93px; gap: 10px; }
    .row.cur { background: #1380dc; color: #fff; }
    .tb-tree .short { height: 25px; }
    .redbox {
      position: absolute;
      left: 62px;
      top: 77px;
      width: 167px;
      height: 44px;
      box-sizing: border-box;
      border: 3px solid #e8000b;
      pointer-events: none;
    }
    .status {
      flex: none;
      height: 42px;
      display: flex;
      align-items: center;
      padding-left: 7px;
      background: #f0f0f0;
      border-top: 1px solid #dcdcdc;
      box-sizing: border-box;
      font-size: 16.500px;
      letter-spacing: -0.3px;
    }
    .field {
      box-sizing: border-box;
      height: 31px;
      background: #fff;
      border: 1.500px solid #c4c4c4;
      border-radius: 3px;
      display: flex;
      align-items: center;
      flex: none;
      white-space: nowrap;
      overflow: hidden;
    }
    .locator { width: 299px; padding-left: 12px; gap: 9px; color: #8a8a8a; letter-spacing: -0.1px; }
    .coords { width: 150px; padding-left: 9px; margin-left: 4px; }
    .scale { width: 120px; padding-left: 5px; }
    .mag { width: 126px; padding-left: 6px; margin-left: 5px; }
    .rot { width: 125px; padding-left: 6px; }
    .clip { flex: none; overflow: hidden; white-space: nowrap; text-align: center; font-size: 15px; letter-spacing: -0.9px; }
    .l-coord { width: 31px; margin-left: 59px; }
    .l-scale { width: 6px; margin-left: 13px; margin-right: 4px; }
    .l-mag { width: 19px; margin-left: 5px; }
    .l-rot { width: 13px; margin-left: 11px; margin-right: 13px; }
    .mouse { width: 38px; flex: none; display: flex; justify-content: center; }
    .lock { width: 32px; margin-left: 12px; flex: none; display: flex; justify-content: center; }
    .end { margin-left: auto; display: flex; flex-direction: column; flex: none; width: 22px; height: 100%; border-left: 1px solid #c4c4c4; }
    .end.drop { align-items: center; justify-content: center; width: 30px; }
    .end.spin { align-items: center; justify-content: center; gap: 5px; }
    .render { margin-left: 9px; display: flex; align-items: center; gap: 8px; flex: none; letter-spacing: -0.9px; }
    .epsg { margin-left: 24px; display: flex; align-items: center; gap: 2px; flex: none; }
    .bubble { margin-left: 35px; flex: none; display: flex; }
    .grip-corner {
      margin-left: 25px;
      width: 14px;
      height: 14px;
      align-self: flex-end;
      margin-bottom: 2px;
      background-image: radial-gradient(circle, #c4c4c4 0.8px, transparent 1px);
      background-size: 4px 4px;
    }
  `

  // places a row of tools on their measured centres, in flow
  private tools(items: [string, number][], size: number, start: number) {
    let end = start
    const widths: Record<string, number> = { grip: 6, sep: 2, dd: 12, dds: 12, ddf: 12, more: 14 }
    return items.map(([raw, c]) => {
      const on = raw.endsWith('*')
      const name = on ? raw.slice(0, -1) : raw
      const w = on ? 47 : widths[name] ?? size
      const ml = c - w / 2 - end
      end = c + w / 2
      const gap = `margin-left:${ml}px`
      if (name === 'grip') return html`<span class="tool grip" style=${gap}></span>`
      if (name === 'sep') return html`<span class="tool sep" style=${gap}></span>`
      if (name === 'more') return html`<span class="tool more" style=${gap}><svg width="12" height="10" viewBox="0 0 12 10"><path d="M1 1l4 4-4 4M7 1l4 4-4 4" fill="none" stroke="#333" stroke-width="1.400"/></svg></span>`
      if (name === 'dd' || name === 'dds' || name === 'ddf') {
        const fill = name === 'dd' ? '#555' : '#bdbdbd'
        const dy = name === 'dds' ? 'translate(0 14)' : ''
        return html`<span class="tool dd" style=${gap}><svg width="12" height="8" viewBox="0 0 12 8" style="overflow:visible"><path d="M0 0h12L6 7z" fill=${fill} transform=${dy}/></svg></span>`
      }
      if (name === 'clock') return html`<span class="tool icon" style=${gap}>${clockIcon(24)}</span>`
      const body = size === 36 ? ICONS[name] : DI[name]
      return html`<span class="tool icon ${on ? 'on' : ''}" style=${gap}><svg width=${size} height=${size} viewBox="0 0 ${size} ${size}" style="overflow:visible">${body}</svg></span>`
    })
  }

  private renderMap() {
    const line = (p: Pt[]) => p.map(q => q.map(v => v.toFixed(1)).join(',')).join(' ')
    return html`<svg width="654" height="699" viewBox="396.500 193 654 699">
      <g fill="none" stroke="#fff" stroke-width="1.600" stroke-linejoin="round" opacity=".95">
        ${borders.map(b => svg`<polyline points=${line(b)}/>`)}
      </g>
      ${hubs.map(h => svg`<circle cx=${h.c[0]} cy=${h.c[1]} r="6" fill="#cdbf9f" stroke="#8c877c" stroke-width=".9"/>`)}
      <g fill="#8e52a2" stroke="#3c3c3c" stroke-width=".8">
        ${hubs.flatMap(h => h.s).concat(loners).map(s => svg`<circle cx=${s[0]} cy=${s[1]} r="4.800"/>`)}
      </g>
      <g stroke="#262626" stroke-width="1.400">
        ${hubs.flatMap(h => h.s.map(s => svg`<line x1=${h.c[0]} y1=${h.c[1]} x2=${s[0]} y2=${s[1]}/>`))}
        <line x1="1025" y1="195" x2=${T(1512, 291)[0]} y2=${T(1512, 291)[1]}/>
      </g>
    </svg>`
  }

  render() {
    return html`<div class="win">
      <div class="title">
        ${qgisLogo()}
        <span class="name">Nearest_Neighbor_CheckPoint1 — QGIS</span>
        <div class="win-btns">
          <span><svg width="14" height="14" viewBox="0 0 14 14"><path d="M1 7h12" stroke="#222" stroke-width="1.300"/></svg></span>
          <span><svg width="15" height="15" viewBox="0 0 15 15"><rect x="1" y="1" width="13" height="13" rx="1.500" fill="none" stroke="#222" stroke-width="1.400"/></svg></span>
          <span><svg width="15" height="15" viewBox="0 0 15 15"><path d="M1 1l13 13M14 1L1 14" stroke="#222" stroke-width="1.400"/></svg></span>
        </div>
      </div>
      <div class="menu">
        ${MENU.map(([a, u, b]) => html`<span>${a}${u.length === 1 ? html`<u>${u}</u>` : u}${b}</span>`)}
      </div>
      <div class="toolbar">${this.tools(ROW1, 36, 2)}</div>
      <div class="toolbar second">${this.tools(ROW2, 36, 2)}</div>
      <div class="main">
        <div class="col">
          <div class="dock-head"><span>Browser</span>${dockBtns}</div>
          <div class="dock-tools">${this.tools(BROWSER_TB, 24, 3)}</div>
          <div class="tree-wrap">
            <div class="rows">
              <div class="row lv1"><span class="arrow"><i class="tri-r"></i></span><span class="ico">${folder(true)}</span><span class="txt">C:\\Users\\ujava\\Downloads</span></div>
              <div class="row lv1"><span class="arrow"><i class="tri-r"></i></span><span class="ico">${folder()}</span><span class="txt">C:\\Users\\ujava\\projects\\python-tut</span></div>
              <div class="row lv1"><span class="arrow"><i class="tri-r"></i></span><span class="ico">${folder()}</span><span class="txt">G:\\My Drive\\earthengine</span></div>
              <div class="row lv0"><span class="arrow"><i class="tri-r"></i></span><span class="ico">${bookmark}</span><span class="txt">Spatial Bookmarks</span></div>
              <div class="row lv0"><span class="arrow"><i class="tri-r"></i></span><span class="ico">${projHome}</span><span class="txt">Project Home</span></div>
              <div class="row lv0"><span class="arrow"><i class="tri-r"></i></span><span class="ico">${homeIcon}</span><span class="txt">Home</span></div>
              <div class="row lv0"><span class="arrow"><i class="tri-r"></i></span><span class="ico">${folder()}</span><span class="txt">C:\\ (Windows-SSD)</span></div>
              <div class="row lv0"><span class="arrow"></span><span class="ico">${folder()}</span></div>
            </div>
            <div class="vbar">
              <span class="btn"><i class="tri-u"></i></span>
              <span class="upper"></span>
              <span class="gap"></span>
              <span class="thumb"></span>
              <span class="btn"><i class="tri-d"></i></span>
            </div>
          </div>
          <div class="hbar">
            <span class="btn"><i class="tri-l"></i></span>
            <span class="fill"></span>
            <span class="thumb"></span>
            <span class="btn"><i class="tri-r"></i></span>
            <span class="corner"></span>
          </div>
          <div class="hsplit"><i></i></div>
          <div class="dock-head"><span>Layers</span>${dockBtns}</div>
          <div class="dock-tools short">${this.tools(LAYERS_TB, 24, 3)}</div>
          <div class="layer-tree">
            <div class="layer sel">${checkbox}<span class="sym"><svg width="22" height="6" viewBox="0 0 22 6"><path d="M0 3h22" stroke="#c0bcc4" stroke-width="1.200"/><circle cx="11" cy="3" r="1.200" fill="#8b4f9f"/></svg></span><u>schools</u></div>
            <div class="layer">${checkbox}<span class="sym"><svg width="14" height="14" viewBox="0 0 14 14"><circle cx="7" cy="7" r="5.500" fill="#b5a98a" stroke="#8d8d8d"/></svg></span>colleges</div>
            <div class="layer">${checkbox}<span class="sym"><svg width="24" height="24" viewBox="0 0 24 24"><rect width="24" height="24" fill="#cfcaca"/></svg></span>districts</div>
          </div>
        </div>
        <div class="gutter"><i></i></div>
        <div class="map">${this.renderMap()}</div>
        <div class="gutter"></div>
        <div class="col">
          <div class="dock-head right"><span>Processing Toolbox</span>${dockBtns}</div>
          <div class="dock-tools">${this.tools(TOOLBOX_TB, 24, 1061)}</div>
          <div class="search">
            <svg width="20" height="20" viewBox="0 0 20 20"><circle cx="8" cy="8" r="6" fill="none" stroke="#8a8a8a" stroke-width="1.400"/><path d="M12.500 12.500l6 6" stroke="#8a8a8a" stroke-width="1.600"/></svg>
            <span class="grow">field cal</span>
            <svg width="20" height="16" viewBox="0 0 20 16"><path d="M6 1h13v14H6L0 8z" fill="#b0b0b0"/><path d="M9 4.500l7 7M16 4.500l-7 7" stroke="#fff" stroke-width="1.800"/></svg>
          </div>
          <div class="tb-tree">
            <div class="row tr0"><span class="arrow"><i class="tri-r"></i></span><span class="ico">${clockIcon(24)}</span><span class="txt">Recently used</span></div>
            <div class="row tr0"><span class="arrow"><i class="tri-d"></i></span><span class="ico">${qgisLogo(22)}</span><span class="txt">Vector table</span></div>
            <div class="row tr1"><span class="ico">${gearSmall()}</span><span class="txt">Advanced Python field calculator</span></div>
            <div class="row tr1 cur"><span class="ico">${gearSmall('#8db6e6', '#1380dc')}</span><span class="txt">Field calculator</span></div>
            <div class="row tr0"><span class="arrow"><i class="tri-d"></i></span><span class="ico">${sagaIcon}</span><span class="txt">SAGA Next Gen</span></div>
            <div class="row short tr2"><span class="arrow"><i class="tri-d"></i></span><span class="txt">Raster calculus</span></div>
            <div class="row short tr3"><span class="ico">${sagaIcon}</span><span class="txt">Random field</span></div>
            <div class="redbox"></div>
          </div>
        </div>
      </div>
      <div class="status">
        <div class="field locator">
          <svg width="20" height="20" viewBox="0 0 20 20"><circle cx="8" cy="8" r="6" fill="none" stroke="#8a8a8a" stroke-width="1.400"/><path d="M12.500 12.500l6 6" stroke="#8a8a8a" stroke-width="1.600"/></svg>
          <span>Type to locate (Ctrl+K)</span>
        </div>
        <span class="clip l-coord">ordin</span>
        <div class="field coords">680537, 1084298</div>
        <span class="mouse"><svg width="26" height="28" viewBox="0 0 26 28"><ellipse cx="13" cy="13" rx="8" ry="12" fill="#1c1c1c" transform="rotate(-22 13 13)"/><circle cx="17" cy="21" r="4" fill="#f4f4f4" stroke="#222"/><path d="M7 8l9-4M9 5l3 9" stroke="#eee" stroke-width="1.200"/><path d="M0 15h3M23 5l3-2M3 25l3-1M21 9h3" stroke="#333"/></svg></span>
        <span class="clip l-scale">a</span>
        <div class="field scale"><span>1:211371</span><span class="end drop"><i class="tri-d"></i></span></div>
        <span class="lock"><svg width="18" height="28" viewBox="0 0 18 28"><path d="M3.500 13V8a5.500 5.500 0 0 1 11 0v5" fill="none" stroke="#9a9a9a" stroke-width="2"/><rect x="0" y="12" width="18" height="16" rx="2" fill="#6e6e6e"/></svg></span>
        <span class="clip l-mag">gni</span>
        <div class="field mag"><span>100%</span><span class="end spin"><i class="tri-u"></i><i class="tri-d"></i></span></div>
        <span class="clip l-rot">at</span>
        <div class="field rot"><span>0.0 °</span><span class="end spin"><i class="tri-u"></i><i class="tri-d"></i></span></div>
        <span class="render">${checkbox}<span>Render</span></span>
        <span class="epsg"><svg width="24" height="22" viewBox="0 0 24 22"><circle cx="12" cy="11" r="9.500" fill="#e4e4e4" stroke="#666"/><path d="M1 8h22M1 14h22M12 1v20M6 3c-2 5-2 11 0 16M18 3c2 5 2 11 0 16" fill="none" stroke="#666" stroke-width="1.100"/></svg><span>EPSG:32643</span></span>
        <span class="bubble"><svg width="26" height="26" viewBox="0 0 26 26"><path d="M13 2c7 0 11 4 11 9 0 4-2 7-5 8l1 5-5-4c-8 1-14-3-14-9C1 6 6 2 13 2z" fill="#6a6a6a"/></svg></span>
        <span class="grip-corner"></span>
      </div>
    </div>`
  }
}

declare global {
  interface HTMLElementTagNameMap {
    'app-root': AppRoot
  }
}
